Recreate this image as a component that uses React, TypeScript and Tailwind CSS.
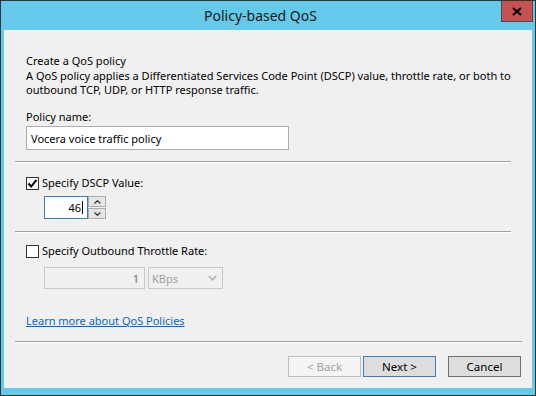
import React from "react";

const font = { fontFamily: '"Noto Sans", "Segoe UI", sans-serif' };

function Separator({ width }: { width: string }) {
  return <div className={`${width} ml-[11px] h-[2px] border-t border-[#a0a0a0] border-b border-b-white`} />;
}

function Checkbox({ checked }: { checked: boolean }) {
  return (
    <div className="mt-[2px] flex h-[13px] w-[13px] shrink-0 items-center justify-center border border-[#333333] bg-white">
      {checked && (
        <svg width="11" height="11" viewBox="0 0 11 11">
          <path d="M1.5 5.5 L4.2 8.5 L9.5 1.8" fill="none" stroke="#000" strokeWidth="2" />
        </svg>
      )}
    </div>
  );
}

function WinButton({ label, kind }: { label: string; kind: "disabled" | "default" | "normal" }) {
  const styles = {
    disabled: "border-[#bfbfbf] bg-[#f4f4f4] text-[#a0a0a0]",
    default: "border-[#3c7fb1] bg-[#dddddd] text-black",
    normal: "border-[#707070] bg-[#dddddd] text-black",
  };
  return (
    <div className={`flex h-[21px] w-[73px] items-center justify-center border text-[11.5px] ${styles[kind]}`}>
      {label}
    </div>
  );
}

export default function App() {
  return (
    <div className="relative h-[396px] w-[536px] border border-[#333333] bg-[#65c9e9]" style={font}>
      <div className="flex h-[29px] items-center pl-[203px] text-[14px] text-[#1a1a1a]">Policy-based QoS</div>
      <div className="absolute right-[2px] top-0 flex h-[21px] w-[32px] items-center justify-center border border-t-0 border-[#4a4a4a] bg-[#c75050]">
        <svg width="10" height="9" viewBox="0 0 10 9">
          <path d="M1 1 L9 8 M9 1 L1 8" stroke="#000" strokeWidth="2.2" />
        </svg>
      </div>
      <div className="mx-[3px] flex h-[358px] flex-col bg-[#f0f0f0] text-[11px] leading-[15px] text-black">
        <div className="mt-[23px] pl-[22px]">Create a QoS policy</div>
        <div className="mt-[1px] pl-[22px] leading-[14px]">
          A QoS policy applies a Differentiated Services Code Point (DSCP) value, throttle rate, or both to
          <br />
          outbound TCP, UDP, or HTTP response traffic.
        </div>
        <div className="mt-[12px] pl-[22px]">Policy name:</div>
        <div className="ml-[22px] mt-[2px] flex h-[24px] w-[263px] items-center border border-[#abadb3] bg-white px-[4px]">
          Vocera voice traffic policy
        </div>
        <div className="mt-[11px]">
          <Separator width="w-[496px]" />
        </div>
        <div className="ml-[22px] mt-[12px] flex items-start gap-[3px]">
          <Checkbox checked />
          <span>Specify DSCP Value:</span>
        </div>
        <div className="ml-[40px] mt-[6px] flex">
          <div className="flex h-[23px] w-[44px] items-center justify-end border border-[#3c7fb1] bg-white pr-[4px]">
            46<span className="ml-[1px] inline-block h-[13px] w-[1px] bg-black" />
          </div>
          <div className="flex flex-col">
            <div className="flex h-[11px] w-[18px] items-center justify-center border border-[#adadad] bg-[#e5e5e5]">
              <svg width="7" height="4" viewBox="0 0 7 4">
                <path d="M0.5 3.5 L3.5 0.7 L6.5 3.5" fill="none" stroke="#333" strokeWidth="1.2" />
              </svg>
            </div>
            <div className="mt-[1px] flex h-[11px] w-[18px] items-center justify-center border border-[#adadad] bg-[#e5e5e5]">
              <svg width="7" height="4" viewBox="0 0 7 4">
                <path d="M0.5 0.5 L3.5 3.3 L6.5 0.5" fill="none" stroke="#333" strokeWidth="1.2" />
              </svg>
            </div>
          </div>
        </div>
        <div className="mt-[12px]">
          <Separator width="w-[496px]" />
        </div>
        <div className="ml-[22px] mt-[10px] flex items-start gap-[3px]">
          <Checkbox checked={false} />
          <span>Specify Outbound Throttle Rate:</span>
        </div>
        <div className="ml-[40px] mt-[9px] flex gap-[3px]">
          <div className="flex h-[22px] w-[101px] items-center justify-end border border-[#c8c8c8] bg-[#f0f0f0] pr-[5px] text-[#6d6d6d]">
            1
          </div>
          <div className="flex h-[22px] w-[75px] items-center justify-between border border-[#c8c8c8] bg-[#f0f0f0] pl-[3px] pr-[5px] text-[#a0a0a0]">
            <span>KBps</span>
            <svg width="9" height="6" viewBox="0 0 9 6">
              <path d="M0.8 1 L4.5 4.8 L8.2 1" fill="none" stroke="#b0b0b0" strokeWidth="1.5" />
            </svg>
          </div>
        </div>
        <div className="ml-[22px] mt-[24px]">
          <span className="text-[#0066cc] underline">Learn more about QoS Policies</span>
        </div>
        <div className="mt-[13px]">
          <Separator width="w-[507px]" />
        </div>
        <div className="mt-[13px] flex justify-end pr-[11px]">
          <WinButton label="< Back" kind="disabled" />
          <div className="ml-[2px]">
            <WinButton label="Next >" kind="default" />
          </div>
          <div className="ml-[12px]">
            <WinButton label="Cancel" kind="normal" />
          </div>
        </div>
      </div>
    </div>
  );
}
